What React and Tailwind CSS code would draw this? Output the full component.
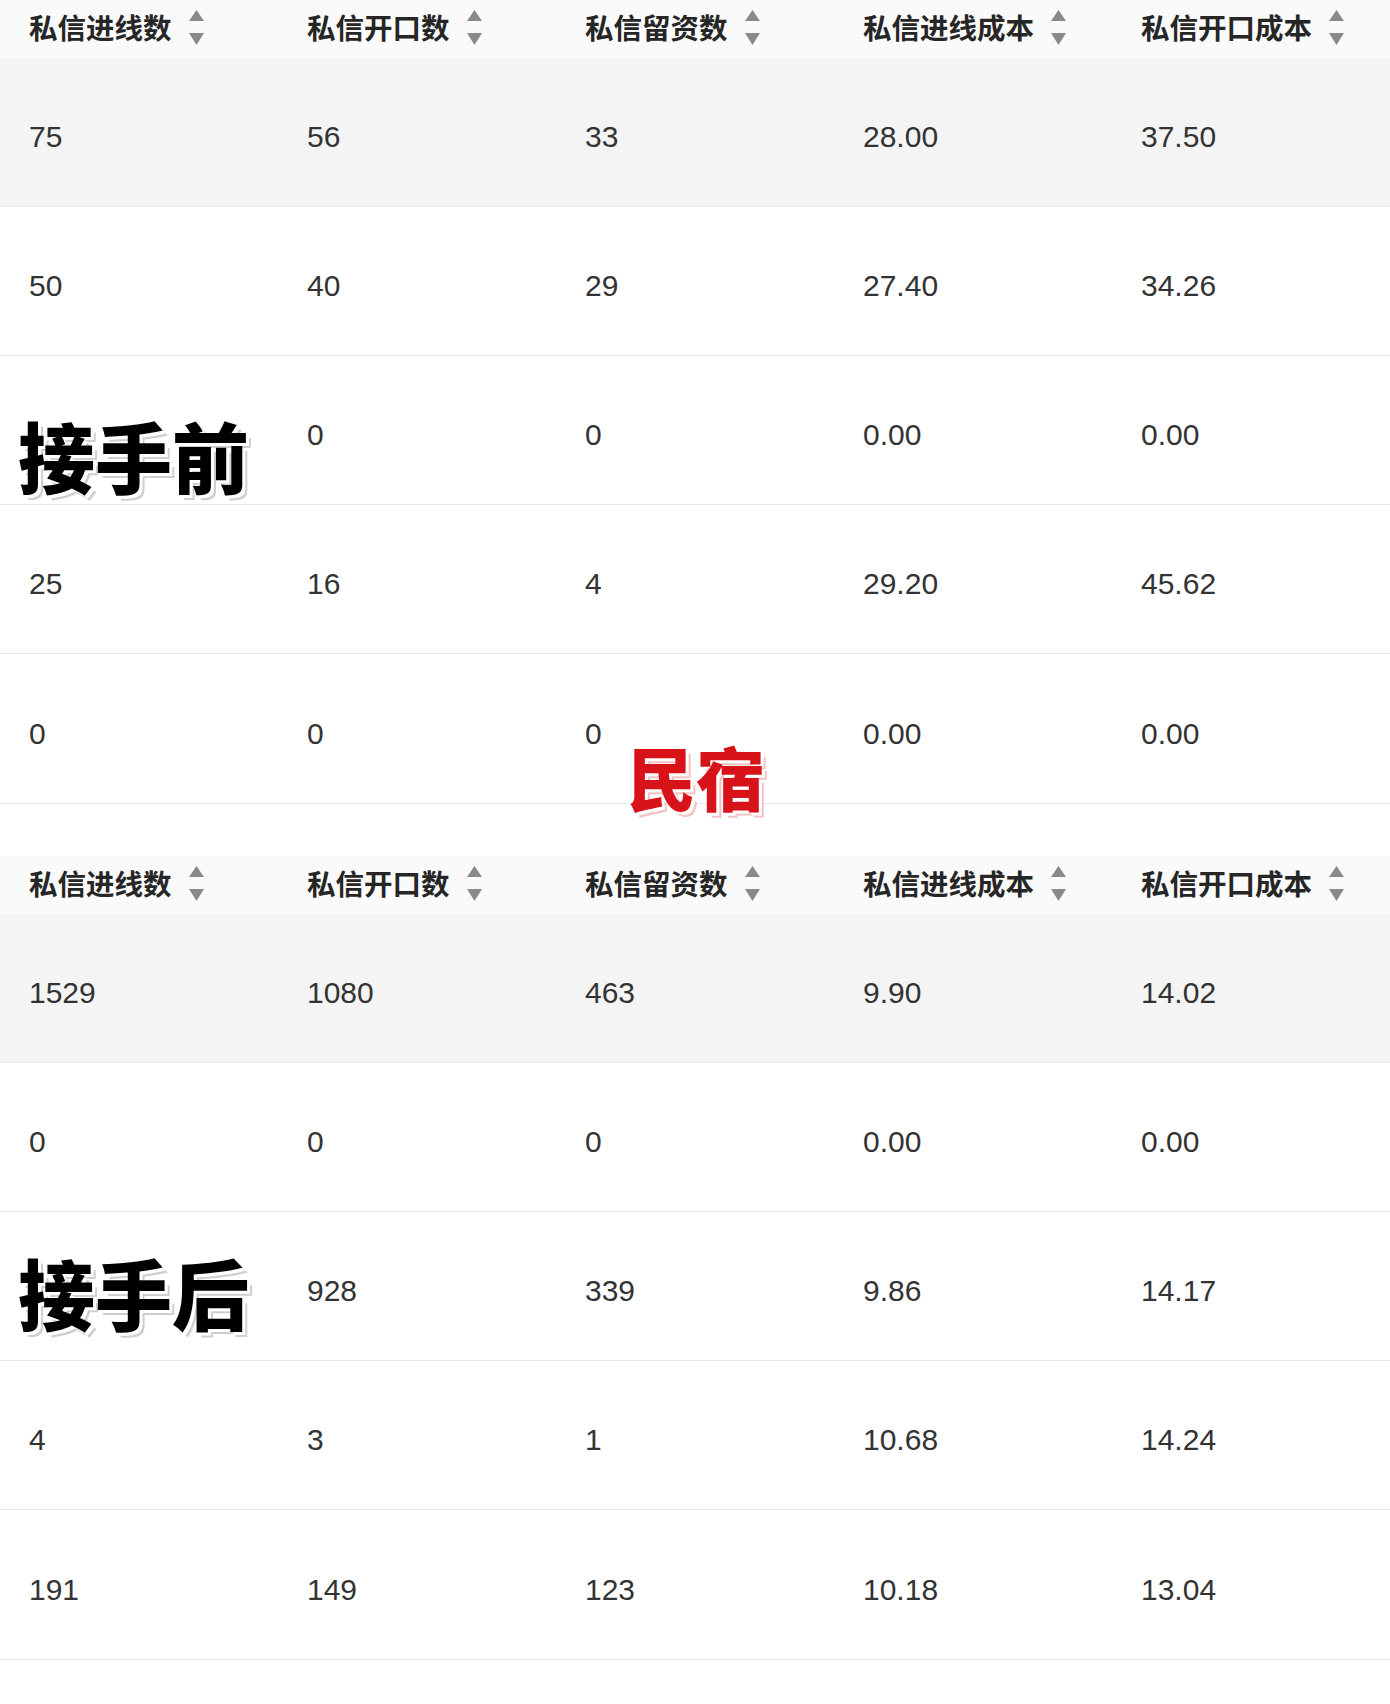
import React from 'react';

const headers = ['私信进线数', '私信开口数', '私信留资数', '私信进线成本', '私信开口成本'];

const before = [
  ['75', '56', '33', '28.00', '37.50'],
  ['50', '40', '29', '27.40', '34.26'],
  ['', '0', '0', '0.00', '0.00'],
  ['25', '16', '4', '29.20', '45.62'],
  ['0', '0', '0', '0.00', '0.00'],
];

const after = [
  ['1529', '1080', '463', '9.90', '14.02'],
  ['0', '0', '0', '0.00', '0.00'],
  ['', '928', '339', '9.86', '14.17'],
  ['4', '3', '1', '10.68', '14.24'],
  ['191', '149', '123', '10.18', '13.04'],
];

const SortIcon = () => (
  <svg width="15" height="35" viewBox="0 0 15 35" className="shrink-0">
    <polygon points="0,11 7.5,0 15,11" fill="#8a8a8a" />
    <polygon points="0,23 15,23 7.5,35" fill="#8a8a8a" />
  </svg>
);

function DataTable({ rows }) {
  return (
    <div className="w-full">
      {/* header */}
      <div className="grid grid-cols-5 h-[58px] bg-[#fafafa]">
        {headers.map((h) => (
          <div key={h} className="flex items-center pl-[29px] pb-[4px] gap-[17px]">
            <span className="text-[28.5px] leading-none font-semibold text-[#262626] [font-family:'Noto_Sans_CJK_SC',sans-serif]">
              {h}
            </span>
            <SortIcon />
          </div>
        ))}
      </div>
      {rows.map((r, i) => (
        <div
          key={i}
          className={`grid grid-cols-5 ${i === 4 ? 'h-[150px]' : 'h-[149px]'} border-b border-[#e8e8e8] ${i === 0 ? 'bg-[#f4f4f4]' : 'bg-white'}`}
        >
          {r.map((v, j) => (
            <div
              key={j}
              className="flex items-center pl-[29px] pt-[9px] text-[30px] text-[#333333] [font-family:'Liberation_Sans',Arial,sans-serif]"
            >
              {v}
            </div>
          ))}
        </div>
      ))}
    </div>
  );
}

export default function App() {
  return (
    <div className="relative w-[1390px] h-[1704px] bg-white overflow-hidden">
      <DataTable rows={before} />
      <div className="h-[52px]" />
      <DataTable rows={after} />

      {/* sticker labels over the tables */}
      <div className="absolute left-[18px] top-[416px] text-[77px] leading-none font-black text-black [font-family:'Noto_Sans_CJK_SC',sans-serif] [text-shadow:3px_3px_0_#fff,5px_5px_0_#cfcfcf]">
        接手前
      </div>
      <div className="absolute left-[627px] top-[742px] text-[69px] leading-none font-black text-[#d81219] [font-family:'Noto_Sans_CJK_SC',sans-serif] [text-shadow:3px_3px_0_#fff,5px_5px_0_#f3c2c2]">
        民宿
      </div>
      <div className="absolute left-[18px] top-[1253px] text-[77px] leading-none font-black text-black [font-family:'Noto_Sans_CJK_SC',sans-serif] [text-shadow:3px_3px_0_#fff,5px_5px_0_#cfcfcf]">
        接手后
      </div>
    </div>
  );
}
